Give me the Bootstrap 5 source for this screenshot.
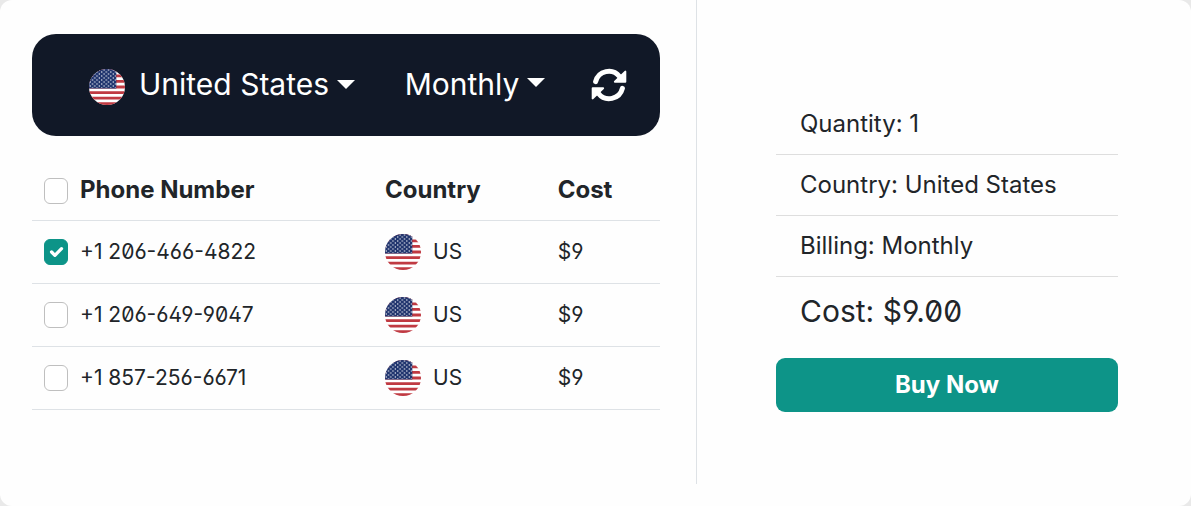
<!DOCTYPE html>
<html lang="en">
<head>
<meta charset="utf-8">
<meta name="viewport" content="width=device-width, initial-scale=1">
<title>Buy phone numbers</title>
<link href="https://cdn.jsdelivr.net/npm/bootstrap@5.3.0/dist/css/bootstrap.min.css" rel="stylesheet">
<style>
  body { font-family: Inter, sans-serif; font-size: 24px; color: #212529; background: #e9e9e9; }
  .panel { background: #fefefe; border-radius: 12px; padding-bottom: 22px; }
  .panel-grid { display: grid; grid-template-columns: 697fr 494fr; }
  .numbers { border-right: 1px solid #dee2e6; padding: 34px 36px 74px 32px; }
  .toolbar { background: #111827; border-radius: 24px; padding: 23px 30px 25px 57px; margin-bottom: 24px; }
  .toolbar .btn { font-size: 30px; line-height: 54px; color: #fff; border: 0; padding: 0; }
  .toolbar .btn svg { display: block; margin-top: 2px; }
  .toolbar .btn .flag { margin-top: 6px; margin-right: 14px; }
  .toolbar .btn-country { margin-right: 50px; }
  .flag { width: 36px; height: 36px; flex: none; }
  .number-table { table-layout: fixed; --bs-table-bg: transparent; color: #212529; }
  .number-table th, .number-table td { padding: 0 12px; vertical-align: middle; }
  .number-table th { height: 60px; font-weight: 700; line-height: 36px; }
  .number-table td { height: 63px; font-size: 21px; }
  .open-digits { font-feature-settings: "zero", "ss01"; }
  .col-number { width: 54.3%; }
  .col-country { width: 27.5%; }
  .number-table .form-check-input { width: 24px; height: 26px; margin: 0; border-color: #bfbfbf; border-radius: 6px; flex: none; }
  .number-table th .form-check-input { margin-top: 2px; }
  .form-check-input:checked { background-color: #0d9488; border-color: #0d9488 !important; }
  .summary { padding: 94px 73px 72px 79px; }
  .summary li { border-bottom: 1px solid #dedede; padding: 12px 24px; line-height: 36px; }
  .summary .total { border: 0; font-size: 30px; line-height: 45px; margin-bottom: 12px; }
  .btn-buy { background: #0d9488; color: #fff; font-size: 24px; font-weight: 700; line-height: 36px; padding: 9px; border: 0; border-radius: 9px; }
  .btn-buy:hover { background: #0f766e; color: #fff; }
</style>
</head>
<body>
<svg class="position-absolute" width="0" height="0" aria-hidden="true">
  <defs>
    <clipPath id="disc"><circle cx="18" cy="18" r="18"/></clipPath>
    <pattern id="stars" width="4.6" height="4" patternUnits="userSpaceOnUse">
      <circle cx="1.2" cy="1" r=".65" fill="#fff"/><circle cx="3.5" cy="3" r=".65" fill="#fff"/>
    </pattern>
    <symbol id="us" viewBox="0 0 36 36">
      <g clip-path="url(#disc)">
        <path fill="#fff" d="M0 0h36v36H0z"/>
        <path stroke="#c03a42" stroke-width="2.77" d="M0 1.38h36M0 6.92h36M0 12.46h36M0 18h36M0 23.54h36M0 29.08h36M0 34.62h36"/>
        <path fill="#22366f" d="M0 0h27.3v19.4H0z"/>
        <path fill="url(#stars)" d="M0 0h27v19H0z"/>
      </g>
    </symbol>
  </defs>
</svg>
<main class="panel">
  <div class="panel-grid">
    <section class="numbers">
      <nav class="toolbar d-flex align-items-center" aria-label="Filters">
        <button class="btn btn-country dropdown-toggle d-flex align-items-center" type="button"><svg class="flag" aria-hidden="true"><use href="#us"/></svg>United States</button>
        <button class="btn dropdown-toggle" type="button">Monthly</button>
        <button class="btn ms-auto" type="button" aria-label="Refresh">
          <svg width="42" height="34" viewBox="-21 -17 42 34" fill="none" stroke="#fff" stroke-width="5" stroke-linecap="round">
            <g id="arc"><path d="M-13.4 -3.4A13.6 13.6 0 0 1 10.5 -8.5"/><path fill="#fff" stroke-width="2" stroke-linejoin="round" d="M16.3 -13.4V-3.2H5.9Z"/></g>
            <use href="#arc" transform="rotate(180)"/>
          </svg>
        </button>
      </nav>
      <table class="table number-table mb-0">
        <colgroup><col class="col-number"><col class="col-country"><col></colgroup>
        <thead>
          <tr>
            <th scope="col"><div class="d-flex align-items-center"><input class="form-check-input" type="checkbox" id="all"><label class="ps-2 ms-1" for="all">Phone Number</label></div></th>
            <th scope="col">Country</th>
            <th scope="col">Cost</th>
          </tr>
        </thead>
        <tbody class="open-digits">
          <tr>
            <td><div class="d-flex align-items-center"><input class="form-check-input" type="checkbox" id="n1" checked><label class="ps-2 ms-1" for="n1">+1 206-466-4822</label></div></td>
            <td><div class="d-flex align-items-center"><svg class="flag" aria-hidden="true"><use href="#us"/></svg><span class="ps-2 ms-1">US</span></div></td>
            <td>$9</td>
          </tr>
          <tr>
            <td><div class="d-flex align-items-center"><input class="form-check-input" type="checkbox" id="n2"><label class="ps-2 ms-1" for="n2">+1 206-649-9047</label></div></td>
            <td><div class="d-flex align-items-center"><svg class="flag" aria-hidden="true"><use href="#us"/></svg><span class="ps-2 ms-1">US</span></div></td>
            <td>$9</td>
          </tr>
          <tr>
            <td><div class="d-flex align-items-center"><input class="form-check-input" type="checkbox" id="n3"><label class="ps-2 ms-1" for="n3">+1 857-256-6671</label></div></td>
            <td><div class="d-flex align-items-center"><svg class="flag" aria-hidden="true"><use href="#us"/></svg><span class="ps-2 ms-1">US</span></div></td>
            <td>$9</td>
          </tr>
        </tbody>
      </table>
    </section>
    <section class="summary">
      <ul class="list-unstyled mb-0">
        <li>Quantity: 1</li>
        <li>Country: United States</li>
        <li>Billing: Monthly</li>
        <li class="total open-digits">Cost: $9.00</li>
      </ul>
      <button class="btn btn-buy w-100" type="button">Buy Now</button>
    </section>
  </div>
</main>
<script src="https://cdn.jsdelivr.net/npm/bootstrap@5.3.0/dist/js/bootstrap.bundle.min.js"></script>
</body>
</html>
